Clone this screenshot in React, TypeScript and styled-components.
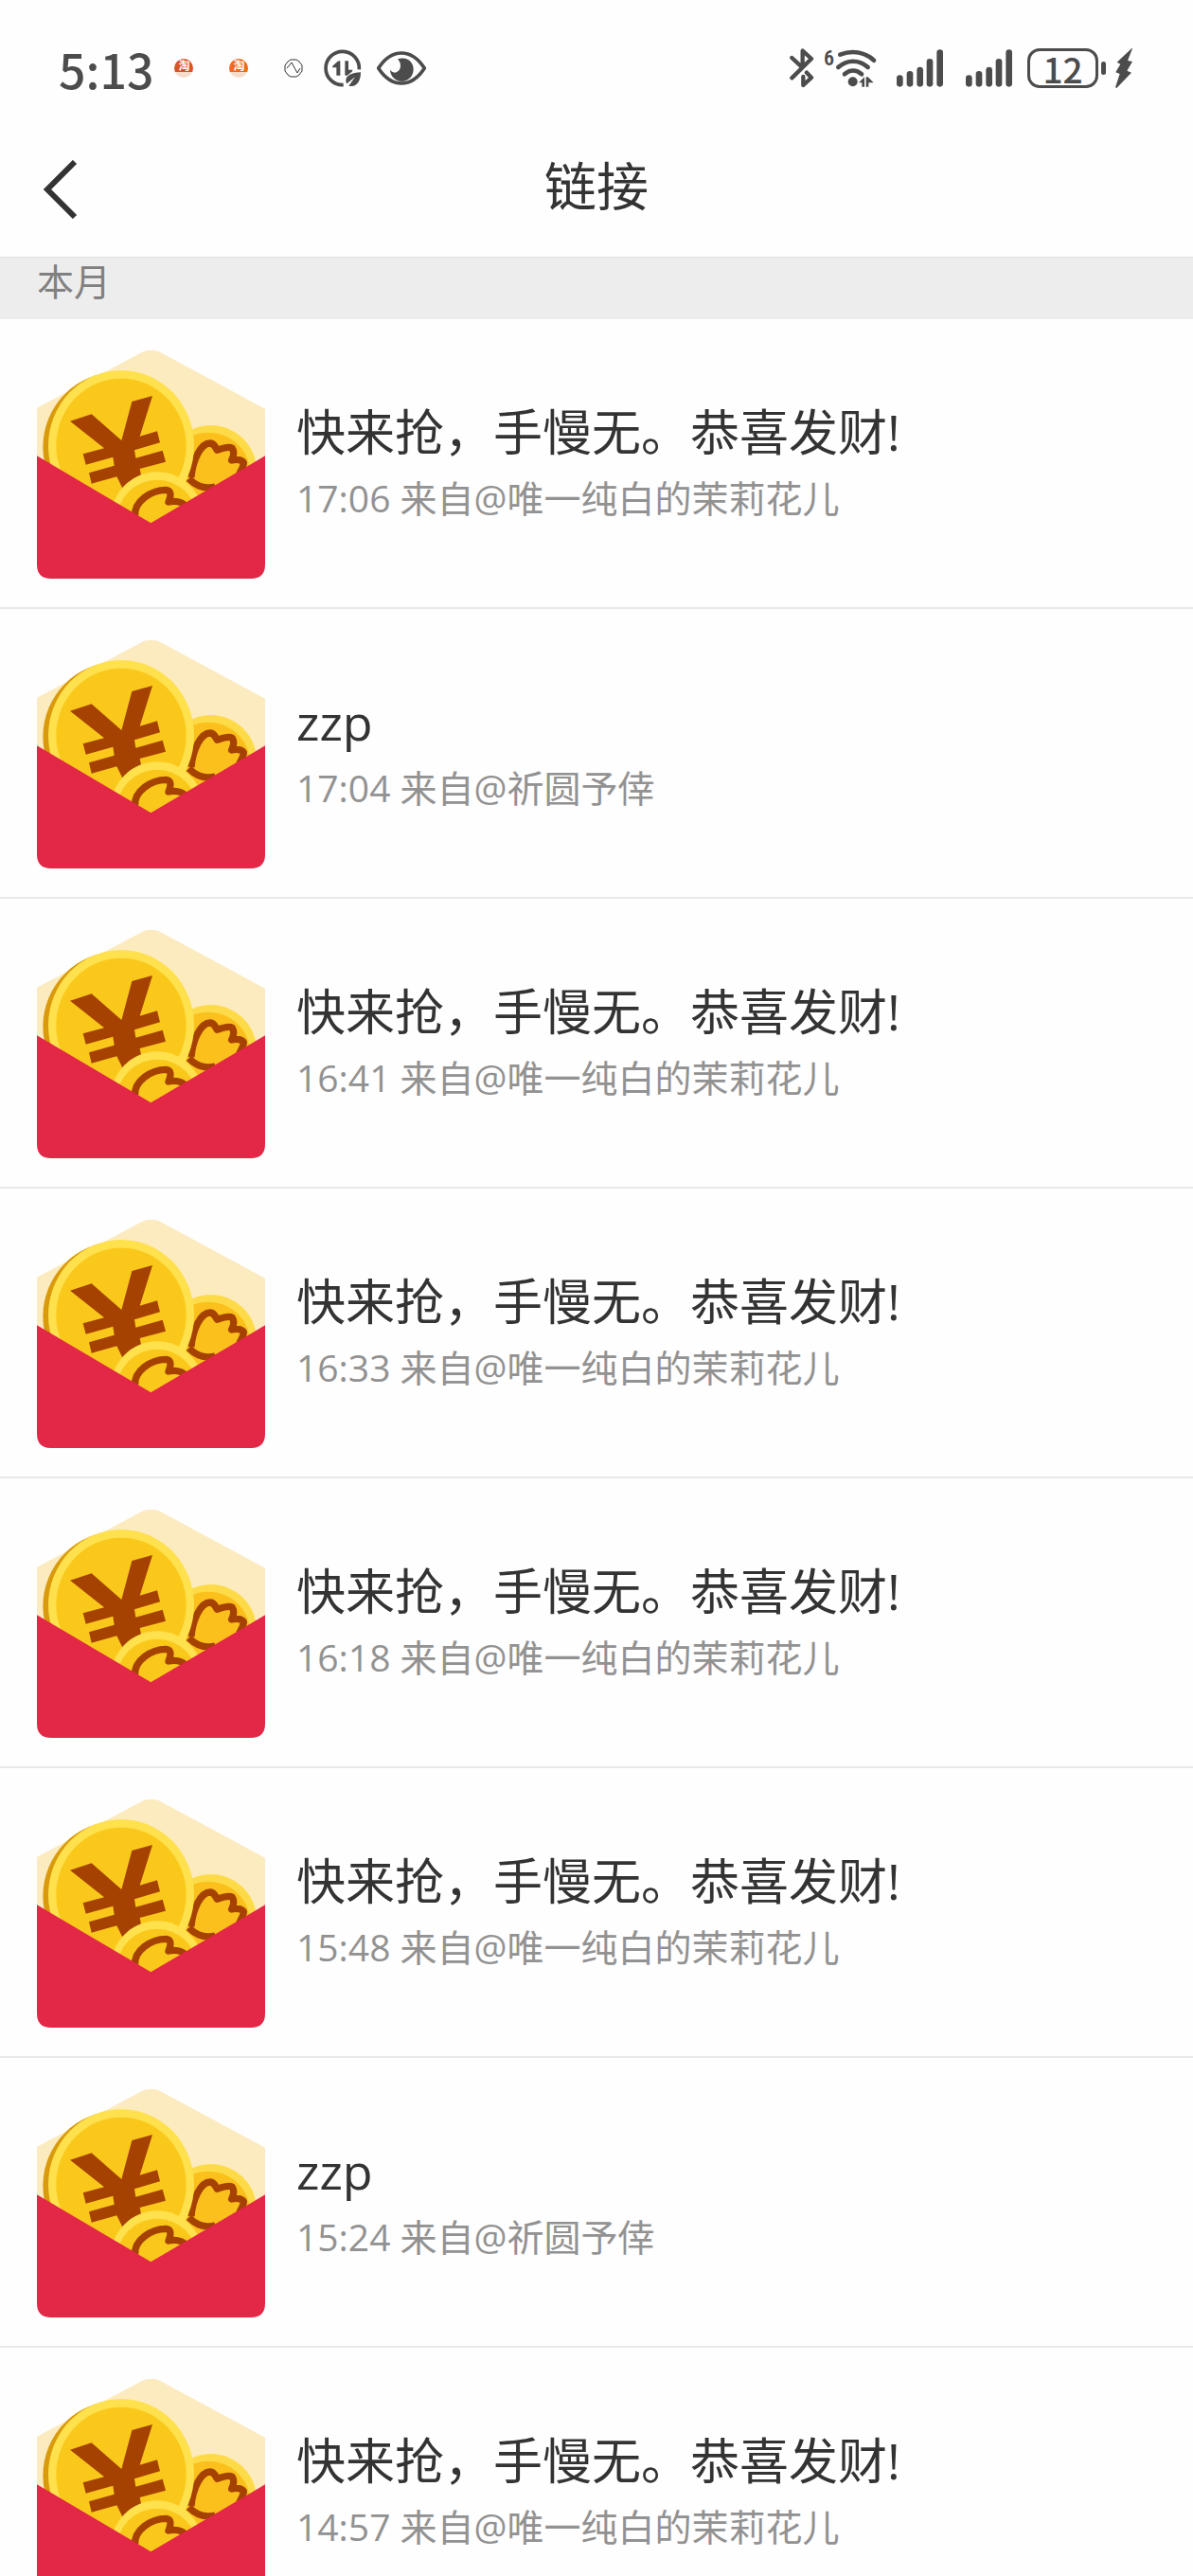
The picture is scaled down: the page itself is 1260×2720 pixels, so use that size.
import React from 'react';
import styled, { createGlobalStyle } from 'styled-components';

const GlobalStyle = createGlobalStyle`
  * {
    box-sizing: border-box;
  }

  body {
    margin: 0;
    background-color: #fefefe;
    color: #333333;
    font-family: 'Open Sans', 'Noto Sans CJK SC', sans-serif;
  }
`;

const Screen = styled.div`
  height: 100vh;
  display: flex;
  flex-direction: column;
  overflow: hidden;
`;

// 状态栏
const StatusBar = styled.div`
  flex: none;
  height: 129px;
  padding: 51px 64px 36px 62px;
  display: flex;
  justify-content: space-between;
  align-items: center;
  color: #4c4c4c;
`;

const StatusGroup = styled.div<{ $gap: number }>`
  height: 42px;
  display: flex;
  align-items: center;
  gap: ${(props) => props.$gap}px;
`;

const Clock = styled.time`
  font-family: 'Noto Sans CJK SC', sans-serif;
  font-size: 50px;
  line-height: 42px;
  font-weight: 500;
`;

const ShopBadge = styled.span<{ $color: string }>`
  width: 20px;
  height: 20px;
  border-radius: 50%;
  background: linear-gradient(${(props) => props.$color} 72%, #f6dccb 72%);
  color: #ffffff;
  font-size: 12px;
  line-height: 15px;
  font-weight: 700;
  text-align: center;
`;

const BatteryWrapper = styled.div`
  display: flex;
  align-items: center;
  gap: 3px;
`;

const BatteryBox = styled.div`
  width: 75px;
  height: 42px;
  border: 3px solid #4c4c4c;
  border-radius: 13px;
  font-family: 'Noto Sans CJK SC', sans-serif;
  font-size: 37px;
  line-height: 36px;
  font-weight: 500;
  text-align: center;
`;

const BatteryTip = styled.div`
  width: 5px;
  height: 14px;
  border-radius: 3px;
  background-color: #4c4c4c;
`;

// 标题栏
const Header = styled.header`
  flex: none;
  height: 142px;
  padding: 0 32px;
  display: grid;
  grid-template-columns: 62px 1fr 62px;
  align-items: center;
`;

const BackButton = styled.button`
  all: unset;
  width: 62px;
  height: 62px;
  cursor: pointer;
`;

const HeaderTitle = styled.h1`
  margin: 0;
  padding-bottom: 8px;
  font-size: 55px;
  line-height: 76px;
  font-weight: 400;
  text-align: center;
`;

// 列表
const List = styled.main`
  flex: 1;
  min-height: 0;
  overflow-y: auto;
  scrollbar-width: none;
`;

const MonthTitle = styled.h2`
  margin: 0;
  height: 66px;
  padding: 0 39px;
  border-top: 1px solid #e2e2e2;
  background-color: #ededed;
  color: #808080;
  font-size: 39px;
  line-height: 50px;
  font-weight: 400;
`;

const Items = styled.ul`
  margin: 0;
  padding: 0;
  list-style: none;
`;

const Item = styled.li`
  border-bottom: 2px solid #e9e9e9;
`;

const ItemLink = styled.a`
  padding: 33px 39px 30px;
  display: flex;
  align-items: center;
  gap: 33px;
  color: inherit;
  text-decoration: none;
`;

const ItemText = styled.div`
  min-width: 0;
  flex: 1;
  line-height: 70px;
`;

const ItemTitle = styled.div`
  font-size: 52px;
`;

const ItemInfo = styled.div`
  color: #929292;
  font-size: 39px;
`;

const LineIcon = () => (
  <svg width='20' height='20' viewBox='0 0 20 20' fill='none' stroke='#333' strokeWidth='1'>
    <path d='M7 1h6l3 2 3 4v6l-3 4-3 2H7l-3-2-3-4V7l3-4z' />
    <path d='M3 10l5-6 6 11 3-5' />
  </svg>
);

const DataSaverIcon = () => (
  <svg width='40' height='40' viewBox='0 0 120 120' fill='none' stroke='#4c4c4c'>
    <path d='M62 113A53 53 0 1 1 112 64' strokeWidth='11' />
    <g fill='#4c4c4c' stroke='none'>
      <path d='M52 37v46H40V58H27q0-4 3-7l14-13q3-2 8-1z' />
      <path d='M67 37h11v28h13q0 4-3 7L76 82q-4 3-9 0z' />
      <path d='M117 73c-28 0-48 11-47 27 0 6 3 9 3 9l26-21-20 28c24 6 38-13 38-43z' />
    </g>
  </svg>
);

const EyeIcon = () => (
  <svg width='52' height='36' viewBox='0 0 156 108' fill='none'>
    <path
      d='M5 54C26 22 50 6 78 6s52 16 73 48c-21 32-45 48-73 48S26 86 5 54z'
      stroke='#4c4c4c'
      strokeWidth='11'
      strokeLinejoin='round'
    />
    <path
      d='M66 25c30-10 50 9 50 33 0 22-17 38-37 38S42 80 42 58c4 8 12 12 20 9 15-6 18-27 4-42z'
      fill='#4c4c4c'
    />
  </svg>
);

const BluetoothIcon = () => (
  <svg
    width='26'
    height='42'
    viewBox='0 0 78 126'
    fill='none'
    stroke='#4c4c4c'
    strokeWidth='13'
    strokeLinecap='round'
    strokeLinejoin='round'
  >
    <path d='M7 30l31 29M7 94l62-61-28-25v50M54 77l15 16-26 24V90' />
  </svg>
);

const WifiIcon = () => (
  <svg
    width='59'
    height='42'
    viewBox='0 0 177 126'
    fill='none'
    stroke='#4c4c4c'
    overflow='visible'
  >
    <text
      x='0'
      y='54'
      fontSize='66'
      fontWeight='600'
      fontFamily='Roboto Condensed, Roboto, sans-serif'
      fill='#4c4c4c'
      stroke='none'
    >
      6
    </text>
    <g strokeWidth='14' strokeLinecap='round'>
      <path d='M52 20c38-14 77-8 107 18' />
      <path d='M46 60c28-25 66-25 94 0' />
      <path d='M66 82c17-15 37-15 54 0' />
    </g>
    <g fill='#4c4c4c' stroke='none'>
      <circle cx='92' cy='106' r='15' />
      <path d='M111 109l18-18v31h-8v-13zM134 91h6l18 18h-16v13h-8z' />
    </g>
  </svg>
);

const SignalIcon = () => (
  <svg width='63' height='42' viewBox='0 0 189 126' fill='#4c4c4c'>
    <rect x='24' y='85' width='20' height='37' rx='10' />
    <rect x='56' y='72' width='20' height='50' rx='10' />
    <rect x='88' y='59' width='20' height='63' rx='10' />
    <rect x='119' y='33' width='20' height='89' rx='10' />
    <rect x='151' y='4' width='20' height='118' rx='10' />
  </svg>
);

const BoltIcon = () => (
  <svg width='18' height='42' viewBox='0 0 54 126' fill='#4c4c4c'>
    <path d='M52 0L5 44l11 6-15 26 13 5L0 124l4 2 47-49-14-6 17-29-15-3L54 1z' />
  </svg>
);

const BackIcon = () => (
  <svg width='62' height='62' viewBox='0 0 62 62' fill='none' stroke='#333' strokeWidth='6'>
    <path d='M47 2L18 31l29 29' />
  </svg>
);

const PacketSvg = styled.svg`
  flex: none;
  width: 241px;
  height: 241px;
`;

const RedPacket = () => (
  <PacketSvg viewBox='57 60 723 723' fill='none' aria-hidden='true'>
    <path d='M57 242L394 64q25-10 50 0l336 181v300H57z' fill='#fdebc0' />
    <circle cx='608' cy='442' r='145' fill='#fddb48' />
    <circle cx='600' cy='454' r='134' fill='#fbc01b' />
    <path
      d='M546 462C550 410 575 354 606 354c16 1 18 19 22 22 12-4 36-14 48-6 6 10 4 26-2 38 14-4 34-2 38 8 0 10-8 24-14 36M538 466c16 16 40 36 84 26'
      stroke='#a54202'
      strokeWidth='22'
      strokeLinejoin='round'
    />
    <circle cx='314' cy='366' r='238' fill='#d99a0c' />
    <ellipse cx='324' cy='362' rx='231' ry='239' fill='#ffe04d' />
    <ellipse cx='324' cy='362' rx='206' ry='213' fill='#fac81b' />
    <path
      d='M162 284L230 262 325 345 358 222 423 204 383 332 438 316 447 352 366 376 370 401 455 377 465 413 383 435 392 480 330 500 310 460 230 482 222 448 302 425 298 398 212 422 203 388 270 370z'
      fill='#a54202'
    />
    <circle cx='438' cy='592' r='147' fill='#ffe04d' />
    <circle cx='438' cy='598' r='128' fill='#fac81b' />
    <path
      d='M368 584c-4-46 52-82 98-82 18 2 16 18 8 38 22-4 44 0 56 14'
      stroke='#a54202'
      strokeWidth='22'
      strokeLinejoin='round'
    />
    <path d='M57 394l361 213 362-213v344q0 45-45 45H102q-45 0-45-45z' fill='#e22747' />
  </PacketSvg>
);

interface LinkItem {
  title: string;
  time: string;
  from: string;
}

const greeting = '快来抢，手慢无。恭喜发财!';

const items: LinkItem[] = [
  { title: greeting, time: '17:06', from: '唯一纯白的茉莉花儿' },
  { title: 'zzp', time: '17:04', from: '祈圆予倖' },
  { title: greeting, time: '16:41', from: '唯一纯白的茉莉花儿' },
  { title: greeting, time: '16:33', from: '唯一纯白的茉莉花儿' },
  { title: greeting, time: '16:18', from: '唯一纯白的茉莉花儿' },
  { title: greeting, time: '15:48', from: '唯一纯白的茉莉花儿' },
  { title: 'zzp', time: '15:24', from: '祈圆予倖' },
  { title: greeting, time: '14:57', from: '唯一纯白的茉莉花儿' },
];

const LinkRow = ({ title, time, from }: LinkItem) => {
  return (
    <Item>
      <ItemLink href='#'>
        <RedPacket />
        <ItemText>
          <ItemTitle>{title}</ItemTitle>
          <ItemInfo>
            {time} 来自@{from}
          </ItemInfo>
        </ItemText>
      </ItemLink>
    </Item>
  );
};

const App = () => {
  return (
    <Screen lang='zh-CN'>
      <GlobalStyle />
      <StatusBar>
        <StatusGroup $gap={22}>
          <Clock>5:13</Clock>
          <StatusGroup $gap={38}>
            <ShopBadge $color='#d9542b'>淘</ShopBadge>
            <ShopBadge $color='#ee6b1f'>淘</ShopBadge>
            <LineIcon />
          </StatusGroup>
          <StatusGroup $gap={16}>
            <DataSaverIcon />
            <EyeIcon />
          </StatusGroup>
        </StatusGroup>
        <StatusGroup $gap={10}>
          <BluetoothIcon />
          <WifiIcon />
          <SignalIcon />
          <SignalIcon />
          <BatteryWrapper>
            <BatteryBox>12</BatteryBox>
            <BatteryTip />
          </BatteryWrapper>
          <BoltIcon />
        </StatusGroup>
      </StatusBar>
      <Header>
        <BackButton type='button' aria-label='返回'>
          <BackIcon />
        </BackButton>
        <HeaderTitle>链接</HeaderTitle>
      </Header>
      <List>
        <MonthTitle>本月</MonthTitle>
        <Items>
          {items.map((item) => (
            <LinkRow key={item.time} {...item} />
          ))}
        </Items>
      </List>
    </Screen>
  );
};

export default App;
